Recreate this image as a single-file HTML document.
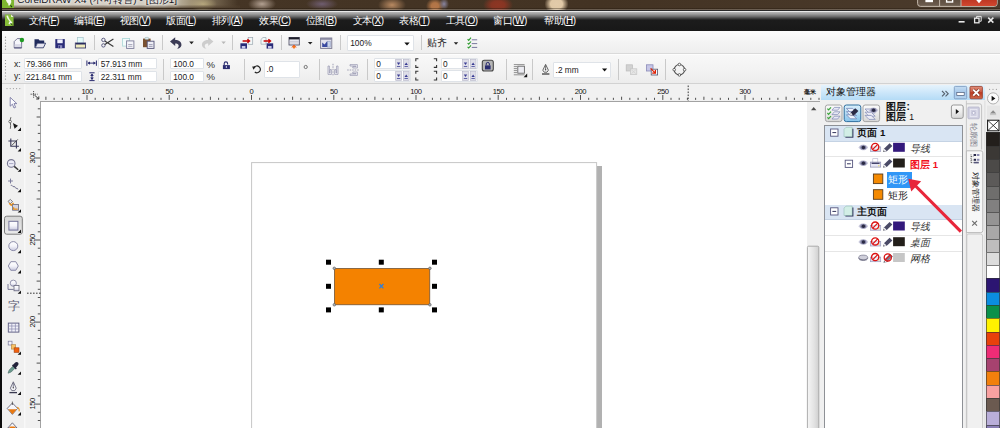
<!DOCTYPE html>
<html>
<head>
<meta charset="utf-8">
<title>CorelDRAW X4</title>
<style>
*{box-sizing:border-box;margin:0;padding:0}
html,body{width:1000px;height:428px;overflow:hidden;background:#fff}
body{font-family:"Liberation Sans",sans-serif;font-size:8.3px;color:#1a1a1a;position:relative}
#app{position:absolute;left:0;top:0;width:1000px;height:428px;overflow:hidden;background:#fff}
.abs{position:absolute}
.t{position:absolute;white-space:nowrap;line-height:1}
/* title bar */
#title{position:absolute;left:0;top:0;width:1000px;height:11px;overflow:hidden;
 background:
 radial-gradient(ellipse 14px 7px at 203px 4px,#a3935f 0,rgba(163,147,95,0) 100%),
 radial-gradient(ellipse 14px 7px at 262px 4px,#b3a192 0,rgba(179,161,146,0) 100%),
 radial-gradient(ellipse 16px 6px at 322px 4px,#6f5d70 0,rgba(111,93,112,0) 100%),
 radial-gradient(ellipse 14px 8px at 392px 5px,#b98a62 0,rgba(185,138,98,0) 100%),
 radial-gradient(ellipse 5px 6px at 444px 4px,#8a86a0 0,rgba(138,134,160,0) 100%),
 radial-gradient(ellipse 9px 8px at 435px 6px,#b5774a 0,#b07446 40%,rgba(181,119,74,0) 100%),
 radial-gradient(ellipse 15px 9px at 498px 5px,#8e3624 0,#873523 45%,rgba(142,51,34,0) 100%),
 radial-gradient(ellipse 12px 10px at 556.5px 4px,#e3cbaa 0,#e0c8a6 50%,rgba(227,201,168,0) 100%),
 linear-gradient(90deg,#463626 0,#433323 600px,#4b3b2c 1000px)}
#title .glow{position:absolute;left:14px;top:0;width:226px;height:8.2px;background:linear-gradient(180deg,rgba(70,54,38,0) 0,rgba(70,54,38,0) 4.6px,rgba(80,64,46,.55) 7px,rgba(70,54,38,.8) 8.2px),linear-gradient(90deg,#d4cec3 0,#d2cbbf 150px,rgba(196,182,150,.7) 178px,rgba(160,145,105,0) 224px)}
#title .shade{position:absolute;left:0;top:7.6px;width:1000px;height:3.4px;background:linear-gradient(180deg,rgba(30,20,10,.35) 0,rgba(30,20,10,.35) .6px,rgba(255,255,255,.2) .7px,rgba(255,255,255,.2) 2px,#2a2a2a 2.2px,#262626 100%)}
/* menu */
#menu{position:absolute;left:0;top:11px;width:1000px;height:20px;background:linear-gradient(180deg,#ececec 0,#e6e6e6 .7px,#b4b4b4 1.3px,#9c9c9c 3px,#6c6c6c 5.5px,#3c3c3c 7.5px,#1c1c1c 9px,#181818 100%)}
#menu .t{color:#fff;font-size:10px;top:4.8px;letter-spacing:-.45px}
/* toolbars */
#tb1{position:absolute;left:2px;top:31px;width:998px;height:23.4px;background:linear-gradient(180deg,#fcfcfc 0,#f4f4f4 50%,#eeeeee 100%);border-bottom:1px solid #dadada}
#tb2{position:absolute;left:2px;top:54px;width:998px;height:30.4px;background:linear-gradient(180deg,#f8f8f8 0,#f2f2f2 60%,#ececec 100%);border-top:1px solid #fdfdfd;border-bottom:1px solid #d2d2d2}
.sep{position:absolute;width:1px;background:#c9c9c9}
.inp{position:absolute;background:#fff;border:1px solid #dfe3e8;border-radius:1px}
.grip{position:absolute;width:1px;border-left:1px dotted #9a9a9a}
#lb{position:absolute;left:0;top:0;width:1.6px;height:428px;background:#0c0c0c}
/* toolbox */
#toolbox{position:absolute;left:2px;top:84px;width:25px;height:344px;background:#f0f0f0}
/* rulers */
#hr{position:absolute;left:25px;top:84px;width:796px;height:18px;background:#f1f1f1}
#vr{position:absolute;left:25px;top:102px;width:16px;height:326px;background:#f1f1f1}
.rl{font-size:7.6px;color:#111;letter-spacing:-.45px}
/* canvas */
#canvas{position:absolute;left:40px;top:101px;width:767.4px;height:327px;background:#fff;border-left:1px solid #a2a2a2;border-top:1px solid #a2a2a2}
#hrl{position:absolute;left:807px;top:101px;width:13px;height:1px;background:#a2a2a2}
#vs{position:absolute;left:807px;top:102px;width:14px;height:326px;background:#f0f0f0}
/* docker */
#dock{position:absolute;left:821px;top:84px;width:165px;height:344px;background:#f0f0f0}
#dhead{position:absolute;left:0;top:1px;width:164px;height:15.4px;background:linear-gradient(180deg,#e6f3fc 0,#cfe8fa 45%,#b4dbf6 100%)}
#tree{position:absolute;left:3px;top:41px;width:139.4px;height:310px;overflow:hidden;background:#fff;border:1px solid #8e9196}
.row{position:absolute;left:0;width:139px;height:15.75px;border-bottom:1px solid #e6e6e6}
.row.nb{border-bottom-color:transparent}
.row.h{background:#d9e5f3;border-bottom:1px solid #c5d3e4}
#tree .t{font-size:9px}
/* palette */
#pal{position:absolute;left:986px;top:84px;width:14px;height:344px;background:#f0f0f0}
.sw{position:absolute;left:-.3px;width:14px;height:13.6px;border:1px solid rgba(50,50,50,.62);border-bottom:none}
</style>
</head>
<body>
<div id="app">

<!-- TITLE BAR -->
<div id="title">
  <div class="glow"></div>
  <div class="abs" style="left:2px;top:0;width:12.4px;height:8.2px;background:#7db52f"></div>
  <svg class="abs" style="left:2px;top:0" width="13" height="9" viewBox="2 0 13 9"><path d="M6,0C6.4,1.8 7.4,3 8.6,4L7.8,5.2L9.6,5.6L10.4,4.2L11.4,2L11,0Z" fill="#f4f9ec"/><path d="M10.4,5.4L12,7" stroke="#1e3a14" stroke-width="1.1"/></svg>
  <div class="t" style="left:17.2px;top:-4.6px;font-size:9.9px;color:#14141e;text-shadow:0 0 3px #fff,0 0 5px #fff;letter-spacing:.1px">CorelDRAW X4 (不可转售) - [图形1]</div>
  <div class="shade"></div>
  <svg class="abs" style="left:0;top:0" width="1000" height="11" viewBox="0 0 1000 11">
    <defs><linearGradient id="gwc" x1="0" y1="0" x2="0" y2="1"><stop offset="0" stop-color="#b8331f"/><stop offset="1" stop-color="#d2472f"/></linearGradient>
    <linearGradient id="gwb" x1="0" y1="0" x2="0" y2="1"><stop offset="0" stop-color="#5a4a3c"/><stop offset="1" stop-color="#6e5e50"/></linearGradient></defs>
    <path d="M917.6,-2V3.6Q917.6,6.4 920.4,6.4H994.4Q997.2,6.4 997.2,3.6V-2Z" fill="url(#gwb)" stroke="#cfc4b8" stroke-width=".9"/>
    <path d="M961.2,-2V6H994.2Q996.8,6 996.8,3.6V-2Z" fill="url(#gwc)"/>
    <path d="M939.6,-1V6.2M961,-1V6.2" stroke="#cfc4b8" stroke-width=".9"/>
    <rect x="925.4" y="-1" width="7.6" height="3.2" fill="#fff"/>
    <rect x="946.6" y="-1" width="6" height="3" fill="none" stroke="#fff" stroke-width="1.4"/>
    <path d="M976,-1.6L979,1.8L982,-1.6" fill="none" stroke="#fff" stroke-width="1.8"/>
  </svg>
</div>

<!-- MENU BAR -->
<div id="menu">
  <svg class="abs" style="left:940px;top:0" width="60" height="20" viewBox="940 11 60 20">
    <path d="M958.6,21.8H964.6" stroke="#e8e8e8" stroke-width="1.6"/>
    <rect x="974.6" y="18.2" width="4.4" height="4.6" fill="none" stroke="#e8e8e8" stroke-width="1.3"/>
    <path d="M976.6,18V16.4H981.2V21.2H979.4" fill="none" stroke="#e8e8e8" stroke-width="1"/>
    <path d="M988.2,17.6L993.4,22.6M993.4,17.6L988.2,22.6" stroke="#e8e8e8" stroke-width="1.5"/>
  </svg>
  <svg class="abs" style="left:0;top:0" width="20" height="20" viewBox="0 11 20 20">
    <path d="M5,14.6H11L13.6,17V26H5Z" fill="#86bd38"/>
    <path d="M11,14.6V17H13.6Z" fill="#e8f4d0"/>
    <path d="M6.4,15.8C6.8,18 8,19.8 9.6,21.4L8.4,23.4L10,24.6L12.4,22.6C10.4,20.6 8.6,18.6 8,15.6Z" fill="#f4f9ec"/>
    <path d="M10.6,23.2L12.6,25.4" stroke="#1e3a14" stroke-width="1"/>
  </svg>
  <div class="t" style="left:28.5px">文件(<u>F</u>)</div>
  <div class="t" style="left:74.0px">编辑(<u>E</u>)</div>
  <div class="t" style="left:119.5px">视图(<u>V</u>)</div>
  <div class="t" style="left:166.0px">版面(<u>L</u>)</div>
  <div class="t" style="left:211.5px">排列(<u>A</u>)</div>
  <div class="t" style="left:259.0px">效果(<u>C</u>)</div>
  <div class="t" style="left:305.5px">位图(<u>B</u>)</div>
  <div class="t" style="left:352.5px">文本(<u>X</u>)</div>
  <div class="t" style="left:399.0px">表格(<u>T</u>)</div>
  <div class="t" style="left:445.5px">工具(<u>O</u>)</div>
  <div class="t" style="left:493.0px">窗口(<u>W</u>)</div>
  <div class="t" style="left:544.0px">帮助(<u>H</u>)</div>
</div>

<!-- TOOLBAR 1 -->
<div id="tb1">
  <div class="sep" style="left:91.5px;top:4px;height:15px"></div>
  <div class="sep" style="left:159.5px;top:4px;height:15px"></div>
  <div class="sep" style="left:230px;top:4px;height:15px"></div>
  <div class="sep" style="left:278.5px;top:4px;height:15px"></div>
  <div class="sep" style="left:337.5px;top:4px;height:15px"></div>
  <div class="sep" style="left:418.5px;top:4px;height:15px"></div>
  <div class="inp" style="left:344.7px;top:4.2px;width:67px;height:15.6px"></div>
  <div class="t" style="left:348.2px;top:8.4px;font-size:8.4px">100%</div>
  <div class="t" style="left:424.8px;top:7px;font-size:9.8px;color:#222">贴齐</div>
</div>

<!-- PROPERTY BAR -->
<div id="tb2">
  <div class="t" style="left:12px;top:5.4px;font-size:8.6px">x:</div>
  <div class="t" style="left:12px;top:17.4px;font-size:8.6px">y:</div>
  <div class="inp" style="left:21.8px;top:2.5px;width:58.4px;height:11.8px"></div>
  <div class="inp" style="left:21.8px;top:15.5px;width:58.4px;height:11.8px"></div>
  <div class="t" style="left:23.9px;top:5.3px">79.366 mm</div>
  <div class="t" style="left:23.9px;top:17.5px">221.841 mm</div>
  <div class="inp" style="left:96.4px;top:2.5px;width:58.4px;height:11.8px"></div>
  <div class="inp" style="left:96.4px;top:15.5px;width:58.4px;height:11.8px"></div>
  <div class="t" style="left:98.7px;top:5.3px">57.913 mm</div>
  <div class="t" style="left:98.7px;top:17.5px">22.311 mm</div>
  <div class="sep" style="left:161px;top:4px;height:21px"></div>
  <div class="inp" style="left:168px;top:2.5px;width:33.5px;height:11.8px"></div>
  <div class="inp" style="left:168px;top:15.5px;width:33.5px;height:11.8px"></div>
  <div class="t" style="left:171.2px;top:5.3px">100.0</div>
  <div class="t" style="left:171.2px;top:17.5px">100.0</div>
  <div class="t" style="left:204.4px;top:4.6px;font-size:9.6px;color:#333">%</div>
  <div class="t" style="left:204.4px;top:17px;font-size:9.6px;color:#333">%</div>
  <div class="sep" style="left:241.5px;top:4px;height:21px"></div>
  <div class="inp" style="left:262.3px;top:6.2px;width:35.4px;height:17px"></div>
  <div class="t" style="left:264.4px;top:10.4px">.0</div>
    <div class="sep" style="left:317.4px;top:4px;height:21px"></div>
  <div class="sep" style="left:365.3px;top:4px;height:21px"></div>
  <div class="inp" style="left:372.3px;top:2.6px;width:36.4px;height:11.8px"></div>
  <div class="inp" style="left:372.3px;top:15.2px;width:36.4px;height:11.8px"></div>
  <div class="t" style="left:374.2px;top:5.3px">0</div>
  <div class="t" style="left:374.2px;top:17.3px">0</div>
  <div class="inp" style="left:439.3px;top:2.6px;width:37px;height:11.8px"></div>
  <div class="inp" style="left:439.3px;top:15.2px;width:37px;height:11.8px"></div>
  <div class="t" style="left:441px;top:5.3px">0</div>
  <div class="t" style="left:441px;top:17.3px">0</div>
  <div class="sep" style="left:503.5px;top:4px;height:21px"></div>
  <div class="sep" style="left:530.4px;top:4px;height:21px"></div>
  <div class="inp" style="left:551.3px;top:7px;width:57.3px;height:16px"></div>
  <div class="t" style="left:553.6px;top:10.8px">.2 mm</div>
  <div class="sep" style="left:615.6px;top:4px;height:21px"></div>
  <div class="sep" style="left:663.4px;top:4px;height:21px"></div>
</div>

<!-- TOOLBOX -->
<div id="toolbox">
  <div class="t" style="left:5.6px;top:215.6px;font-size:11.6px;color:#55556e">字</div>
</div>

<!-- RULERS -->
<div id="hr">
  <div class="t rl" style="left:52.1px;top:4.2px;width:20px;text-align:center">100</div>
  <div class="t rl" style="left:134.3px;top:4.2px;width:20px;text-align:center">50</div>
  <div class="t rl" style="left:216.5px;top:4.2px;width:20px;text-align:center">0</div>
  <div class="t rl" style="left:298.8px;top:4.2px;width:20px;text-align:center">50</div>
  <div class="t rl" style="left:381.0px;top:4.2px;width:20px;text-align:center">100</div>
  <div class="t rl" style="left:463.3px;top:4.2px;width:20px;text-align:center">150</div>
  <div class="t rl" style="left:545.5px;top:4.2px;width:20px;text-align:center">200</div>
  <div class="t rl" style="left:627.8px;top:4.2px;width:20px;text-align:center">250</div>
  <div class="t rl" style="left:710.0px;top:4.2px;width:20px;text-align:center">300</div>
  <div class="t" style="left:778.6px;top:5.4px;font-size:6px;color:#111;font-weight:bold">毫米</div>
</div>
<div id="vr">
  <div class="t rl" style="left:-1.8px;top:52.2px;width:20px;text-align:center;transform:rotate(-90deg)">300</div>
  <div class="t rl" style="left:-1.8px;top:134.3px;width:20px;text-align:center;transform:rotate(-90deg)">250</div>
  <div class="t rl" style="left:-1.8px;top:216.3px;width:20px;text-align:center;transform:rotate(-90deg)">200</div>
  <div class="t rl" style="left:-1.8px;top:298.4px;width:20px;text-align:center;transform:rotate(-90deg)">150</div>
</div>

<!-- CANVAS -->
<div id="canvas">
  <svg class="abs" style="left:0;top:0" width="766" height="326" viewBox="41 102 766 326">
    <rect x="597" y="166" width="5" height="270" fill="#b1b1b1"/>
    <rect x="251.6" y="162.6" width="345" height="280" fill="#fff" stroke="#c6c6c6" stroke-width="1"/>
    <rect x="334.4" y="268.4" width="95.4" height="36.4" fill="#f48200" stroke="#5c4a3a" stroke-width=".7"/>
    <g fill="#000">
      <rect x="326" y="259.7" width="5" height="5"/><rect x="378.8" y="259.7" width="5" height="5"/><rect x="432" y="259.7" width="5" height="5"/>
      <rect x="326" y="283.8" width="5" height="5"/><rect x="432" y="283.8" width="5" height="5"/>
      <rect x="326" y="307.4" width="5" height="5"/><rect x="378.8" y="307.4" width="5" height="5"/><rect x="432" y="307.4" width="5" height="5"/>
    </g>
    <g fill="#aab0b8" stroke="#555" stroke-width=".6">
      <circle cx="334.3" cy="268.3" r="1.3"/><circle cx="429.9" cy="268.3" r="1.3"/><circle cx="334.3" cy="304.8" r="1.3"/><circle cx="429.9" cy="304.8" r="1.3"/>
    </g>
    <path d="M379.4,284L383.4,288.4M383.4,284L379.4,288.4" stroke="#2f7fd8" stroke-width="1.3" fill="none"/>
  </svg>
</div>
<div id="vs"></div>
<div id="hrl"></div>

<!-- DOCKER -->
<div id="dock">
  <div id="dhead">
    <div class="t" style="left:5.4px;top:2.4px;font-size:10px;color:#111">对象管理器</div>
    <svg class="abs" style="left:119px;top:4px" width="10" height="9" viewBox="940 88 10 9"><path d="M942,90L944.7,92.7L942,95.4M945.5,90L948.2,92.7L945.5,95.4" fill="none" stroke="#56626e" stroke-width="1.1"/></svg>
  </div>
  <div class="t" style="left:65.4px;top:18.4px;font-size:10px;font-weight:bold;color:#111">图层:</div>
  <div class="t" style="left:65.4px;top:28.4px;font-size:10px;font-weight:bold;color:#111">图层 <span style="font-weight:normal;font-size:8.6px">1</span></div>
  <div id="tree">
    <div class="row h" style="top:-0.20px"></div>
    <div class="row" style="top:15.55px"></div>
    <div class="row nb" style="top:31.30px"></div>
    <div class="row nb" style="top:47.05px"></div>
    <div class="row nb" style="top:62.80px"></div>
    <div class="row h" style="top:78.55px"></div>
    <div class="row" style="top:94.30px"></div>
    <div class="row" style="top:110.05px"></div>
    <div class="row nb" style="top:125.80px"></div>
    <div class="abs" style="left:62.1px;top:46.1px;width:25px;height:15.8px;background:#3096f6"></div>
    <div class="t" style="left:32.4px;top:2.4px;font-weight:bold;font-size:9.7px;color:#111">页面 1</div>
    <div class="t" style="left:85.0px;top:17.6px;font-style:italic;font-size:10px;color:#333">导线</div>
    <div class="t" style="left:85.2px;top:33.8px;font-weight:bold;font-size:9.6px;color:#f2101c">图层 1</div>
    <div class="t" style="left:62.6px;top:49.4px;font-size:9.6px;color:#fff">矩形</div>
    <div class="t" style="left:62.6px;top:65.2px;font-size:9.6px;color:#222">矩形</div>
    <div class="t" style="left:32.4px;top:80.9px;font-weight:bold;font-size:9.7px;color:#111">主页面</div>
    <div class="t" style="left:85.0px;top:96.2px;font-style:italic;font-size:10px;color:#333">导线</div>
    <div class="t" style="left:85.0px;top:111.9px;font-style:italic;font-size:10px;color:#333">桌面</div>
    <div class="t" style="left:85.0px;top:127.7px;font-style:italic;font-size:10px;color:#333">网格</div>
  </div>
</div>

<!-- PALETTE -->
<div id="pal">
  <svg class="abs" style="left:0;top:0" width="14" height="50" viewBox="986 84 14 50">
    <g fill="#a4a4a4"><circle cx="989.6" cy="89.4" r=".6"/><circle cx="993" cy="89.4" r=".6"/><circle cx="996.4" cy="89.4" r=".6"/></g>
    <circle cx="993.1" cy="98.4" r="5.6" fill="#fbfbfb" stroke="#a8a8a8" stroke-width=".9"/>
    <path d="M991.6,95.8V101L995.4,98.4Z" fill="#111"/>
    <rect x="987" y="105.6" width="13" height="13" fill="#e6e6e6"/>
    <path d="M990,113.6L993.1,110.2L996.2,113.6Z" fill="#8c8c8c"/><path d="M990,114.6H996.2" stroke="#b4b4b4" stroke-width=".7"/>
    <rect x="987.6" y="120.2" width="11.4" height="10.6" fill="#fff" stroke="#111" stroke-width="1"/>
    <path d="M987.6,120.2L999,130.8M999,120.2L987.6,130.8" stroke="#111" stroke-width=".8"/>
  </svg>
  <div class="sw" style="top:48.40px;background:#231f1c"></div>
  <div class="sw" style="top:61.68px;background:#3b3835"></div>
  <div class="sw" style="top:74.96px;background:#4c4a48"></div>
  <div class="sw" style="top:88.24px;background:#5c5a59"></div>
  <div class="sw" style="top:101.52px;background:#6f6e6d"></div>
  <div class="sw" style="top:114.80px;background:#818080"></div>
  <div class="sw" style="top:128.08px;background:#959494"></div>
  <div class="sw" style="top:141.36px;background:#a9a8a8"></div>
  <div class="sw" style="top:154.64px;background:#bebdbd"></div>
  <div class="sw" style="top:167.92px;background:#dcdcdc"></div>
  <div class="sw" style="top:181.20px;background:#ffffff"></div>
  <div class="sw" style="top:194.48px;background:#2c1572"></div>
  <div class="sw" style="top:207.76px;background:#0b8de0"></div>
  <div class="sw" style="top:221.04px;background:#0a904a"></div>
  <div class="sw" style="top:234.32px;background:#fff200"></div>
  <div class="sw" style="top:247.60px;background:#e8410b"></div>
  <div class="sw" style="top:260.88px;background:#ee2c76"></div>
  <div class="sw" style="top:274.16px;background:#a6426f"></div>
  <div class="sw" style="top:287.44px;background:#f2800c"></div>
  <div class="sw" style="top:300.72px;background:#f9a1a1"></div>
  <div class="sw" style="top:314.00px;background:#6b5a50"></div>
  <div class="sw" style="top:327.28px;background:#b9aed9"></div>
  <div class="sw" style="top:340.56px;background:#8a7fb5"></div>
</div>

<svg id="ic1" class="abs" style="left:0;top:0" width="1000" height="428" viewBox="0 0 1000 428">
<!-- tb1 grip -->
<g fill="#8c8c8c"><circle cx="5.5" cy="37.2" r=".6"/><circle cx="5.5" cy="40.2" r=".6"/><circle cx="5.5" cy="43.2" r=".6"/><circle cx="5.5" cy="46.2" r=".6"/><circle cx="5.5" cy="49.2" r=".6"/></g>
<!-- new -->
<path d="M14.2,47.8V41.6L17.2,38.6H21.6V47.8Z" fill="#f6f6fb" stroke="#6c6c8c" stroke-width=".9"/>
<path d="M14.6,44.2H21.2V47.4H14.6Z" fill="#d9d9e6"/>
<path d="M14.2,47.9H21.6" stroke="#3a3a6a" stroke-width=".9"/>
<circle cx="21.9" cy="40" r="2.2" fill="#1f9a22"/>
<!-- open -->
<path d="M34.5,47.8V39.2H38.6L39.6,40.6H44.2V43.2H37.2L35,47.8Z" fill="#1f2a5c"/>
<path d="M35.2,47.8L37.4,43.2H45.6L43.4,47.8Z" fill="#e4e4f0" stroke="#1f2a5c" stroke-width=".8"/>
<!-- save -->
<rect x="55.3" y="39.1" width="9.5" height="9.1" fill="#2a2c78"/>
<rect x="57.3" y="39.4" width="5.4" height="3.8" fill="#eeeefc"/>
<rect x="58" y="45.2" width="4.2" height="3" fill="#8c8cc0"/>
<rect x="58.6" y="45.8" width="1.3" height="2.4" fill="#2a2c78"/>
<!-- print -->
<rect x="77.4" y="37.6" width="5.8" height="5.6" fill="#e4fbfa" stroke="#a5c4cc" stroke-width=".7"/>
<rect x="75.3" y="43" width="10.3" height="5" fill="#efebbd" stroke="#2a2c60" stroke-width=".8"/>
<rect x="76" y="43" width="9" height="1.5" fill="#2a2c60"/>
<!-- scissors -->
<g fill="none" stroke="#5a5a80" stroke-width="1"><circle cx="103.4" cy="39.9" r="1.7"/><circle cx="103.4" cy="45.4" r="1.7"/></g>
<path d="M104.8,41L113.4,46.4M104.8,44.4L113.4,39" stroke="#3a3a3a" stroke-width="1.2" fill="none"/>
<!-- copy -->
<rect x="122.6" y="38.5" width="7" height="7.6" fill="#f2fbfb" stroke="#a9d6d6" stroke-width=".8"/>
<rect x="126.6" y="40.9" width="7.3" height="7.5" fill="#f5f5fa" stroke="#7b7b98" stroke-width=".9"/>
<path d="M128.2,44.5H132.4M128.2,46.3H132.4" stroke="#9a9ab0" stroke-width=".8"/>
<!-- paste -->
<rect x="143" y="38.6" width="7.6" height="8.6" fill="#7a5131"/>
<rect x="145" y="37.4" width="3.6" height="2.2" rx=".8" fill="#dfeaf0" stroke="#8aa" stroke-width=".5"/>
<rect x="147.2" y="41.2" width="6.8" height="7.2" fill="#eeeef5" stroke="#55557a" stroke-width=".9"/>
<path d="M148.8,44.6H152.6M148.8,46.4H152.6" stroke="#8a8aa6" stroke-width=".8"/>
<!-- undo -->
<path id="undo" d="M170,41.6L175.2,37.2V39.9C179.6,39.8 181.9,42.5 181.4,45.4C181,47.4 179.3,48.6 177,48.6C178.6,47.6 179,45.9 178.4,44.8C177.8,43.6 176.5,43.4 175.2,43.4V46Z" fill="#3c3c56"/>
<path d="M189.2,41.6h4.6l-2.3,2.6z" fill="#222"/>
<!-- redo -->
<path d="M213.4,41.6L208.2,37.2V39.9C203.8,39.8 201.5,42.5 202,45.4C202.4,47.4 204.1,48.6 206.4,48.6C204.8,47.6 204.4,45.9 205,44.8C205.6,43.6 206.9,43.4 208.2,43.4V46Z" fill="#cdcdcd"/>
<path d="M221.4,41.6h4.4l-2.2,2.5z" fill="#b8b8b8"/>
<!-- import -->
<rect x="248.2" y="37.5" width="4.5" height="6.8" fill="#f2f7f7" stroke="#9aa6b0" stroke-width=".7"/>
<rect x="240.4" y="43.3" width="6.6" height="5.3" fill="#2a2c78"/>
<rect x="241.8" y="46" width="3.6" height="2.6" fill="#c8c8e8"/>
<path d="M242.6,41H249M247.4,39.2L249.6,41L247.4,42.8" stroke="#c40000" stroke-width="1.3" fill="none"/>
<!-- export -->
<path d="M261,44.2V39.4L263,37.5H266V44.2Z" fill="#f2f7f7" stroke="#9aa6b0" stroke-width=".7"/>
<rect x="266.6" y="43.3" width="6.6" height="5.3" fill="#2a2c78"/>
<rect x="268" y="46" width="3.6" height="2.6" fill="#c8c8e8"/>
<path d="M263.6,41H270M268.4,39.2L270.6,41L268.4,42.8" stroke="#c40000" stroke-width="1.3" fill="none"/>
<!-- launcher -->
<rect x="289" y="37.5" width="10.3" height="7.5" fill="#e8e8f0" stroke="#44445a" stroke-width=".8"/>
<rect x="289" y="37.3" width="10.3" height="2.1" fill="#1e1e2a"/>
<path d="M289.6,41.5H298.6M289.6,43H298.6" stroke="#b8b8c8" stroke-width=".6"/>
<path d="M294,44.8L296.8,47.5L295.2,47.2L294,49L292.8,47.2L291.2,47.5Z" fill="#f0450c"/><circle cx="294" cy="47" r=".8" fill="#f8c020"/>
<path d="M307.9,41.9h4.6l-2.3,2.6z" fill="#222"/>
<!-- welcome -->
<rect x="320.6" y="38" width="11.2" height="10.4" fill="#e2e2ec" stroke="#77778f" stroke-width=".9"/>
<rect x="320.6" y="38" width="11.2" height="1.8" fill="#8a8aa2"/>
<path d="M322.2,47V42.4L324.6,44.6L326.8,41.4L328,43V47Z" fill="#3a4aa0"/>
<rect x="327.4" y="41.2" width="2.8" height="5.8" fill="#c9d3ea" stroke="#8090b8" stroke-width=".5"/>
<!-- zoom combo arrow -->
<path d="M404.3,42.4h5.4l-2.7,3z" fill="#111"/>
<path d="M453.8,42.2h4.4l-2.2,2.5z" fill="#222"/>
<!-- options -->
<g fill="none" stroke="#2c9a2c" stroke-width="1.1"><path d="M467.6,39.2l1.1,1.2l2.3,-2.7"/><path d="M467.6,43l1.1,1.2l2.3,-2.7"/><path d="M467.6,46.8l1.1,1.2l2.3,-2.7"/></g>
<path d="M471.8,39.8H477.2M471.8,43.6H477.2M471.8,47.4H477.2" stroke="#6a6a92" stroke-width=".9"/>
</svg>
<svg id="ic2" class="abs" style="left:0;top:0" width="1000" height="428" viewBox="0 0 1000 428">
<!-- pb grip -->
<g fill="#8c8c8c"><circle cx="5.5" cy="60.5" r=".6"/><circle cx="5.5" cy="63.6" r=".6"/><circle cx="5.5" cy="66.7" r=".6"/><circle cx="5.5" cy="69.8" r=".6"/><circle cx="5.5" cy="72.9" r=".6"/><circle cx="5.5" cy="76" r=".6"/><circle cx="5.5" cy="79.1" r=".6"/></g>
<!-- width icon -->
<path d="M86.9,60.5V65.8M96.4,60.5V65.8M88,63.1H95.4" stroke="#2a2c70" stroke-width="1" fill="none"/>
<path d="M87.6,63.1L90,61.4V64.8ZM95.8,63.1L93.4,61.4V64.8Z" fill="#2a2c70"/>
<!-- height icon -->
<path d="M89.4,72.8H94.6M89.4,80.6H94.6M92,74H92V79.4" stroke="#2a2c70" stroke-width="1" fill="none"/>
<path d="M92,73.4L93.8,76H90.2ZM92,80L93.8,77.4H90.2Z" fill="#2a2c70"/>
<!-- lock open -->
<rect x="222.9" y="65.1" width="7" height="4" fill="#2a2c70"/>
<path d="M224.2,65.2V63.6A1.7,1.7 0 0 1 227.6,63.6V64.4" stroke="#2a2c70" stroke-width="1.1" fill="none"/>
<rect x="225.8" y="66.2" width="1.2" height="1.6" fill="#d8d8f0"/>
<!-- rotate -->
<path d="M254.2,67.4A3.4,3.4 0 1 1 254.8,72" stroke="#222" stroke-width="1.2" fill="none"/>
<path d="M252.2,66.4L256,66.6L253.4,69.8Z" fill="#222"/>
<circle cx="305.7" cy="67" r="1.6" fill="none" stroke="#5a5a5a" stroke-width=".8"/>
<!-- mirror h -->
<path d="M333,63.8V76" stroke="#8a8aa4" stroke-width=".8" stroke-dasharray="1.5 1"/>
<path d="M328,66V74.4H331.4V69.6H330V73H329.4V66Z" fill="#f3f3f8" stroke="#8c8ca8" stroke-width=".65"/>
<path d="M338,66V74.4H334.6V69.6H336V73H336.6V66Z" fill="#f3f3f8" stroke="#8c8ca8" stroke-width=".65"/>
<!-- mirror v -->
<path d="M347.2,70H359.6" stroke="#8a8aa4" stroke-width=".8" stroke-dasharray="1.5 1"/>
<path d="M350,64.6H357.4V68H352.8V66.6H356V66H350Z" fill="#f3f3f8" stroke="#8c8ca8" stroke-width=".65"/>
<path d="M350,75.4H357.4V72H352.8V73.4H356V74H350Z" fill="#f3f3f8" stroke="#8c8ca8" stroke-width=".65"/>
<!-- spinners -->
<g id="spin1">
<rect x="395.7" y="59.5" width="5.8" height="9" fill="#dedee8" stroke="#b4b4c6" stroke-width=".6"/>
<rect x="403.3" y="59.5" width="5.8" height="9" fill="#dedee8" stroke="#b4b4c6" stroke-width=".6"/>
<path d="M396.9,62.6h3.4l-1.7,2.4zM396.9,66.2h3.4v.7h-3.4z" fill="#3a3c94"/>
<path d="M404.5,65h3.4l-1.7,-2.4zM404.5,66.2h3.4v.7h-3.4z" fill="#3a3c94"/>
</g>
<use href="#spin1" y="12"/>
<use href="#spin1" x="66.9"/>
<use href="#spin1" x="66.9" y="12"/>
<!-- corner brackets -->
<g id="brk" fill="none" stroke="#333" stroke-width="1.1">
<path d="M418.4,58.7H415.8V61.2M415.8,64.9V67.4H418.4"/>
<path d="M433.8,58.7H436.6V61.2M436.6,64.9V67.4H433.8"/>
</g>
<use href="#brk" y="12.6"/>
<!-- lock button -->
<rect x="482.3" y="60.2" width="11" height="10.8" rx="2" fill="#b5b5b5" stroke="#474747" stroke-width="1.1"/>
<rect x="485" y="65.4" width="5.6" height="4" fill="#2a2c70"/>
<path d="M486.2,65.4V64A1.6,1.6 0 0 1 489.4,64V65.4" stroke="#2a2c70" stroke-width="1" fill="none"/>
<!-- wrap icon -->
<path d="M513.8,64.6H524.6M513.8,66.6H517M513.8,68.6H517M513.8,70.6H517M513.8,72.6H517M513.8,74.8H524.6" stroke="#777" stroke-width=".8"/>
<rect x="517.8" y="66.2" width="6.6" height="7" fill="#ececf2" stroke="#666" stroke-width=".9"/>
<path d="M523.6,77.2H527.2V73.6Z" fill="#111"/>
<!-- pen nib -->
<path d="M545.6,64.4L548.4,70.2L547,72.2H544.2L542.8,70.2Z" fill="#f2f2f2" stroke="#444" stroke-width=".8"/>
<path d="M545.6,65.4V69.4" stroke="#444" stroke-width=".7"/>
<circle cx="545.6" cy="69.8" r=".7" fill="#444"/>
<path d="M542,74H549.4" stroke="#333" stroke-width="1.2"/>
<!-- combo arrow -->
<path d="M602,68.6h5.2l-2.6,3z" fill="#111"/>
<!-- icon1 faded -->
<rect x="626.2" y="64.8" width="6.4" height="6.2" fill="#d2d2d2" stroke="#bcbcbc" stroke-width=".7"/>
<rect x="630.4" y="68.8" width="6.4" height="5.8" fill="#e6e6e6" stroke="#c4c4c4" stroke-width=".7"/>
<path d="M631.4,69.8L635.8,73.6M635.8,69.8L631.4,73.6" stroke="#d0d0d0" stroke-width=".7"/>
<!-- icon2 -->
<rect x="646.6" y="64.8" width="6.4" height="6.2" fill="#c6c6e6" stroke="#8a8ab8" stroke-width=".8"/>
<rect x="651.2" y="69.2" width="6.4" height="5.8" fill="#f6f6ff" stroke="#55556a" stroke-width=".8"/>
<path d="M650.6,68.4L654.8,72.6M655.4,70V73.2H652.2" stroke="#e02000" stroke-width="1.2" fill="none"/>
<!-- circle icon -->
<circle cx="679.4" cy="69.7" r="5.2" fill="none" stroke="#555" stroke-width="1.1"/>
<g fill="#fff" stroke="#444" stroke-width=".8"><circle cx="679.4" cy="64.5" r="1.3"/><circle cx="684.6" cy="69.7" r="1.3"/><circle cx="679.4" cy="74.9" r="1.3"/><circle cx="674.2" cy="69.7" r="1.3"/></g>
</svg>
<svg id="ic3" class="abs" style="left:0;top:0" width="1000" height="428" viewBox="0 0 1000 428">
<path d="M87.0,95V99.9M169.2,95V99.9M251.5,95V99.9M333.8,95V99.9M416.0,95V99.9M498.2,95V99.9M580.5,95V99.9M662.8,95V99.9M745.0,95V99.9M45.9,96.7V99.9M128.1,96.7V99.9M210.4,96.7V99.9M292.6,96.7V99.9M374.9,96.7V99.9M457.1,96.7V99.9M539.4,96.7V99.9M621.6,96.7V99.9M703.9,96.7V99.9M786.1,96.7V99.9M54.1,97.8V99.9M62.3,97.8V99.9M70.6,97.8V99.9M78.8,97.8V99.9M95.2,97.8V99.9M103.5,97.8V99.9M111.7,97.8V99.9M119.9,97.8V99.9M136.4,97.8V99.9M144.6,97.8V99.9M152.8,97.8V99.9M161.0,97.8V99.9M177.5,97.8V99.9M185.7,97.8V99.9M193.9,97.8V99.9M202.2,97.8V99.9M218.6,97.8V99.9M226.8,97.8V99.9M235.1,97.8V99.9M243.3,97.8V99.9M259.7,97.8V99.9M267.9,97.8V99.9M276.2,97.8V99.9M284.4,97.8V99.9M300.9,97.8V99.9M309.1,97.8V99.9M317.3,97.8V99.9M325.5,97.8V99.9M342.0,97.8V99.9M350.2,97.8V99.9M358.4,97.8V99.9M366.6,97.8V99.9M383.1,97.8V99.9M391.3,97.8V99.9M399.5,97.8V99.9M407.8,97.8V99.9M424.2,97.8V99.9M432.4,97.8V99.9M440.7,97.8V99.9M448.9,97.8V99.9M465.4,97.8V99.9M473.6,97.8V99.9M481.8,97.8V99.9M490.0,97.8V99.9M506.5,97.8V99.9M514.7,97.8V99.9M522.9,97.8V99.9M531.1,97.8V99.9M547.6,97.8V99.9M555.8,97.8V99.9M564.0,97.8V99.9M572.3,97.8V99.9M588.7,97.8V99.9M597.0,97.8V99.9M605.2,97.8V99.9M613.4,97.8V99.9M629.8,97.8V99.9M638.1,97.8V99.9M646.3,97.8V99.9M654.5,97.8V99.9M671.0,97.8V99.9M679.2,97.8V99.9M687.4,97.8V99.9M695.6,97.8V99.9M712.1,97.8V99.9M720.3,97.8V99.9M728.5,97.8V99.9M736.8,97.8V99.9M753.2,97.8V99.9M761.5,97.8V99.9M769.7,97.8V99.9M777.9,97.8V99.9M794.4,97.8V99.9M802.6,97.8V99.9M810.8,97.8V99.9M819.0,97.8V99.9" stroke="#333" stroke-width=".85" fill="none"/>
<path d="M37.8,108.8H40.2M36.6,117.0H40.2M37.8,125.2H40.2M37.8,133.4H40.2M37.8,141.6H40.2M37.8,149.8H40.2M35.2,158.0H40.2M37.8,166.2H40.2M37.8,174.4H40.2M37.8,182.6H40.2M37.8,190.8H40.2M36.6,199.0H40.2M37.8,207.2H40.2M37.8,215.4H40.2M37.8,223.6H40.2M37.8,231.8H40.2M35.2,240.0H40.2M37.8,248.2H40.2M37.8,256.5H40.2M37.8,264.7H40.2M37.8,272.9H40.2M36.6,281.1H40.2M37.8,289.3H40.2M37.8,297.5H40.2M37.8,305.7H40.2M37.8,313.9H40.2M35.2,322.1H40.2M37.8,330.3H40.2M37.8,338.5H40.2M37.8,346.7H40.2M37.8,354.9H40.2M36.6,363.1H40.2M37.8,371.3H40.2M37.8,379.5H40.2M37.8,387.7H40.2M37.8,395.9H40.2M35.2,404.1H40.2M37.8,412.3H40.2M37.8,420.5H40.2" stroke="#333" stroke-width=".85" fill="none"/>
<path d="M688.2,85.5V101" stroke="#222" stroke-width=".9" stroke-dasharray="1.6 1.4" fill="none"/>
<path d="M27,293.2H40.5" stroke="#222" stroke-width=".9" stroke-dasharray="1.6 1.4" fill="none"/>
<path d="M33.6,91V98M30.6,94.2H37.6" stroke="#222" stroke-width=".8" stroke-dasharray="1.2 .9" fill="none"/><path d="M34.4,95L38.6,98.8M38.8,96.4V99H36.2" stroke="#222" stroke-width=".9" fill="none"/>
</svg>
<svg id="ic4" class="abs" style="left:0;top:0" width="1000" height="428" viewBox="0 0 1000 428">
<defs>
<linearGradient id="gsh" x1="0" y1="0" x2="0" y2="1"><stop offset="0" stop-color="#fff"/><stop offset=".5" stop-color="#f4f4fa"/><stop offset="1" stop-color="#c9c9de"/></linearGradient>
<linearGradient id="gbtn" x1="0" y1="0" x2="0" y2="1"><stop offset="0" stop-color="#d6d6d6"/><stop offset="1" stop-color="#eaeaea"/></linearGradient>
<path id="fly" d="M0,3.4H3.4V0Z" fill="#111"/>
</defs>
<!-- grip -->
<g fill="#9a9a9a"><circle cx="7" cy="88.6" r=".6"/><circle cx="10.2" cy="88.6" r=".6"/><circle cx="13.4" cy="88.6" r=".6"/><circle cx="16.6" cy="88.6" r=".6"/><circle cx="19.8" cy="88.6" r=".6"/></g>
<!-- divider -->
<path d="M24.8,84V428" stroke="#fbfbfb" stroke-width="1"/>
<!-- pick -->
<path d="M10.2,97.4V106.2L12.4,104.2L14,108L15.6,107.3L14,103.6H16.8Z" fill="#fdfdff" stroke="#6c6c9a" stroke-width=".8" stroke-linejoin="round"/>
<!-- shape -->
<path d="M10.9,117.2C9.2,120.5 11.4,124.5 10.3,128.8" stroke="#555" stroke-width=".9" fill="none"/>
<circle cx="10.1" cy="121.6" r="1.3" fill="#fff" stroke="#444" stroke-width=".7"/>
<path d="M12.9,123L18,125.8L14.6,128.8Z" fill="#1a1a1a"/>
<use href="#fly" x="17.6" y="127.6"/>
<!-- crop -->
<path d="M10.8,138.4V146.2H18.9M8.4,141H16.4V148.4" stroke="#3a3a5a" stroke-width="1.1" fill="none"/>
<path d="M11.6,145.6L17.8,139.4" stroke="#444" stroke-width=".9"/>
<use href="#fly" x="17.6" y="148"/>
<!-- zoom -->
<circle cx="11.2" cy="163.4" r="3.8" fill="#ececf6" stroke="#777792" stroke-width="1.1"/>
<path d="M9,163.6H13.4" stroke="#a8a8c4" stroke-width="1"/>
<path d="M14.2,166.4L18.2,169.8" stroke="#333" stroke-width="1.5"/>
<use href="#fly" x="17.6" y="168.4"/>
<!-- freehand -->
<path d="M10.5,178.6V183.4M8.1,181H12.9" stroke="#7c7c9c" stroke-width="1"/>
<path d="M10.8,185.4C12.2,184.2 12.6,187.6 14,186.6C15.2,185.8 15.4,189.2 16.8,188.4L18.2,189.2" stroke="#6c6c8c" stroke-width="1" fill="none"/>
<use href="#fly" x="17.6" y="188.8"/>
<!-- smart fill -->
<path d="M8,201.4L10.4,199.4L12.6,201.6L10.2,203.8Z" fill="#e4e4ee" stroke="#555" stroke-width=".7"/>
<path d="M9.2,203.2L11.2,205.2L13.6,203" stroke="#e8901c" stroke-width="1.4" fill="none"/>
<rect x="12.6" y="204.6" width="6" height="5.6" fill="#d4d4e0" stroke="#66667c" stroke-width=".8"/>
<path d="M13.6,207.2V209.2H17.6" stroke="#e8901c" stroke-width="1.3" fill="none"/>
<use href="#fly" x="17.6" y="209.2"/>
<!-- rectangle (selected) -->
<rect x="4.5" y="216.2" width="17.8" height="18" rx="2.2" fill="url(#gbtn)" stroke="#7c7c7c" stroke-width="1"/>
<rect x="8.9" y="221.3" width="9" height="8.8" fill="url(#gsh)" stroke="#74749a" stroke-width="1"/>
<use href="#fly" x="17.6" y="229.6"/>
<!-- ellipse -->
<circle cx="13.3" cy="246.1" r="4.5" fill="url(#gsh)" stroke="#8080a0" stroke-width=".9"/>
<use href="#fly" x="17.6" y="249.8"/>
<!-- polygon -->
<path d="M8.3,266L10.8,261.7H15.8L18.3,266L15.8,270.3H10.8Z" fill="url(#gsh)" stroke="#8080a0" stroke-width=".9"/>
<use href="#fly" x="17.6" y="270"/>
<!-- basic shapes -->
<path d="M8,284V289.4H13.6" stroke="#6c6c8c" stroke-width=".9" fill="none"/>
<circle cx="13.3" cy="283.2" r="3.1" fill="url(#gsh)" stroke="#7c7c9c" stroke-width=".8"/>
<rect x="14" y="285.4" width="5" height="5.4" fill="url(#gsh)" stroke="#66667c" stroke-width=".8"/>
<use href="#fly" x="17.6" y="290.4"/>
<!-- table -->
<rect x="8.3" y="323.1" width="10.6" height="9" fill="#f1f1f9" stroke="#56567c" stroke-width=".9"/>
<path d="M8.3,326H18.9M8.3,329H18.9M11.8,323.1V332.1M15.4,323.1V332.1" stroke="#8a8aae" stroke-width=".7"/>
<!-- blend -->
<rect x="8.2" y="341.2" width="3.8" height="3.8" fill="#f4f4fc" stroke="#77779a" stroke-width=".7"/>
<rect x="11.3" y="344.7" width="4.4" height="4.4" fill="#f9c264" stroke="#b08040" stroke-width=".6"/>
<rect x="14.1" y="347.8" width="4.9" height="4.6" fill="#f0600e" stroke="#a04010" stroke-width=".6"/>
<use href="#fly" x="17.6" y="351.4"/>
<!-- eyedropper -->
<path d="M8,373.2L9.2,370L13.6,365.6L15.6,367.6L11.2,372Z" fill="#6a9a8e" stroke="#4a6a64" stroke-width=".6"/>
<path d="M13,364.8L15,362.8C16,361.6 17.6,362 18.2,362.8C18.8,363.8 18.6,365 17.6,365.8L16,367.8L16.8,368.6L15.8,369.4L12,365.6L12.8,364.6Z" fill="#22223a"/>
<use href="#fly" x="17.6" y="371.4"/>
<!-- outline pen -->
<path d="M13.3,381.8L16.2,388.2L14.8,390.6H11.8L10.4,388.2Z" fill="#f4f4f8" stroke="#55556c" stroke-width=".8"/>
<path d="M13.3,383V387.4" stroke="#55556c" stroke-width=".7"/>
<circle cx="13.3" cy="387.8" r=".7" fill="#444"/>
<path d="M9.4,392.6H17" stroke="#3a3a50" stroke-width="1.3"/>
<use href="#fly" x="17.6" y="391.6"/>
<!-- fill bucket -->
<path d="M12.4,403L17.6,408.4L12.4,414.4L7.2,408.4Z" fill="#f6f6fa" stroke="#55556c" stroke-width=".8"/>
<path d="M8.2,409.2H16.8L12.4,414.2Z" fill="#e87810"/>
<path d="M12.4,401.6V405" stroke="#444" stroke-width=".8"/>
<path d="M17.2,407.4C19,407.8 19.6,409.6 19,411.4" stroke="#e8901c" stroke-width="1.1" fill="none"/>
<use href="#fly" x="17.6" y="412"/>
<!-- interactive fill -->
<path d="M12.4,422.8L17,428H7.8Z" fill="#f4f4f8" stroke="#55556c" stroke-width=".8"/>
<path d="M10.4,426.4H14.4L15.6,428H9.2Z" fill="#e87810"/>
</svg>
<svg id="ic5" class="abs" style="left:0;top:0" width="1000" height="428" viewBox="0 0 1000 428">
<defs>
<linearGradient id="gb1" x1="0" y1="0" x2="0" y2="1"><stop offset="0" stop-color="#fbfbfb"/><stop offset=".5" stop-color="#ececec"/><stop offset="1" stop-color="#d6d6d6"/></linearGradient>
<linearGradient id="gb2" x1="0" y1="0" x2="0" y2="1"><stop offset="0" stop-color="#d9effb"/><stop offset=".5" stop-color="#b4dcf5"/><stop offset="1" stop-color="#86c3ea"/></linearGradient>
<linearGradient id="gcl" x1="0" y1="0" x2="0" y2="1"><stop offset="0" stop-color="#e0907c"/><stop offset=".45" stop-color="#cc5a44"/><stop offset=".5" stop-color="#bd3a22"/><stop offset="1" stop-color="#cf6a4c"/></linearGradient>
<linearGradient id="gmn" x1="0" y1="0" x2="0" y2="1"><stop offset="0" stop-color="#c4dcf2"/><stop offset=".5" stop-color="#a6c8ea"/><stop offset="1" stop-color="#b4d2ee"/></linearGradient>
<linearGradient id="gth" x1="0" y1="0" x2="1" y2="0"><stop offset="0" stop-color="#f6f6f6"/><stop offset=".6" stop-color="#e2e2e2"/><stop offset="1" stop-color="#cfcfcf"/></linearGradient>
<g id="eye"><path d="M0,2.9C1.6,0.6 3.4,0 4.9,0C6.6,0 8.4,0.8 9.7,2.9C8.4,5 6.6,5.7 4.9,5.7C3.4,5.7 1.6,5 0,2.9Z" fill="#c6c6da"/><ellipse cx="4.9" cy="2.9" rx="3" ry="2.2" fill="#8484a6"/><ellipse cx="5" cy="2.9" rx="1.7" ry="1.7" fill="#2a2a44"/></g>
<g id="pencil"><path d="M0,8.4L1,5L6.4,-0.2L9.2,2.4L3.6,7.8Z" fill="#4a4a66"/><path d="M0,8.4L1.1,5.2L3.4,7.6Z" fill="#f2f2f6"/><path d="M0,8.4L.6,6.9L1.5,7.8Z" fill="#333"/></g>
<g id="printer"><rect x="2.6" y="0" width="5" height="3.6" fill="#fff" stroke="#b4b4cc" stroke-width=".6"/><rect x=".3" y="3.4" width="10.2" height="5" fill="#e7e7f5" stroke="#8a8aae" stroke-width=".7"/><rect x="1.4" y="3.9" width="8" height="1.4" fill="#45456c"/><rect x="8" y="6.4" width="1.2" height="1.2" fill="#f0e060"/></g>
<g id="noprint"><rect x=".3" y="3.9" width="10.2" height="4.6" fill="#dedef1" stroke="#9a9abc" stroke-width=".7"/><rect x="8" y="6.2" width="1.2" height="1.2" fill="#f0e060"/><circle cx="5" cy="3.9" r="3.6" fill="rgba(255,255,255,.55)" stroke="#dc1414" stroke-width="1.3"/><path d="M7.5,1.4L2.5,6.4" stroke="#dc1414" stroke-width="1.3"/></g>
<g id="minus"><rect x="0" y="0" width="7.4" height="7.2" fill="#fff" stroke="#56567e" stroke-width=".9"/><path d="M1.8,3.6H5.6" stroke="#33335a" stroke-width="1"/></g>
<g id="pageic"><path d="M1.4,1.4H9.4V10.4H1.4Z" fill="#2c2c56"/><path d="M0,2L2,0H8.2V9.4H0Z" fill="#d2eee6" stroke="#8ab4ac" stroke-width=".5"/></g>
</defs>
<rect x="954.3" y="86.4" width="12.4" height="12.4" rx="1" fill="url(#gmn)" stroke="#7d9cc2" stroke-width=".9"/>
<rect x="956.8" y="92.4" width="7.4" height="3" fill="#fff" stroke="#4a5a78" stroke-width=".7"/>
<rect x="970" y="86.4" width="12.4" height="12.4" rx="1" fill="url(#gcl)" stroke="#9a4634" stroke-width=".9"/>
<path d="M973.2,89.6L979.2,95.6M979.2,89.6L973.2,95.6" stroke="#7a3020" stroke-width="3"/><path d="M973.2,89.6L979.2,95.6M979.2,89.6L973.2,95.6" stroke="#fff" stroke-width="1.9"/>
<rect x="825.4" y="105" width="16.6" height="16.6" rx="2.2" fill="url(#gb1)" stroke="#9c9c9c" stroke-width=".9"/>
<rect x="844.2" y="105" width="16.6" height="16.6" rx="2.2" fill="url(#gb2)" stroke="#2e6e9e" stroke-width="1"/>
<rect x="863" y="105" width="16.6" height="16.6" rx="2.2" fill="url(#gb1)" stroke="#9c9c9c" stroke-width=".9"/>
<path d="M827.4,108.6l1.2,1.3l2.4,-2.6" stroke="#3aa43a" stroke-width="1.2" fill="none"/>
<path d="M832,110.19999999999999L834.4,107.39999999999999H840L837.6,110.19999999999999Z" fill="#e9e9f6" stroke="#7c86b4" stroke-width=".7"/>
<path d="M827.4,113l1.2,1.3l2.4,-2.6" stroke="#3aa43a" stroke-width="1.2" fill="none"/>
<path d="M832,114.6L834.4,111.8H840L837.6,114.6Z" fill="#e9e9f6" stroke="#7c86b4" stroke-width=".7"/>
<path d="M827.4,117.4l1.2,1.3l2.4,-2.6" stroke="#3aa43a" stroke-width="1.2" fill="none"/>
<path d="M832,119.0L834.4,116.2H840L837.6,119.0Z" fill="#e9e9f6" stroke="#7c86b4" stroke-width=".7"/>
<path d="M846.4,108.4H852.6L856.6,112.4H850.4Z" fill="#eef2fb" stroke="#6c7cb0" stroke-width=".7"/>
<path d="M846.4,111.6H852.6L856.6,115.6H850.4Z" fill="#eef2fb" stroke="#6c7cb0" stroke-width=".7"/>
<path d="M846.4,114.8H852.6L856.6,118.8H850.4Z" fill="#eef2fb" stroke="#6c7cb0" stroke-width=".7"/>
<path d="M850,115.2L850.8,112.6L855.2,108.2L858.4,111L853.8,115.4Z" fill="#2a2a44"/><path d="M850,115.2L850.8,112.8L852.6,114.4Z" fill="#fff"/>
<path d="M865,109H871.2L875.2,113H869Z" fill="#ececf6" stroke="#7c86b4" stroke-width=".7"/>
<path d="M865,112.2H871.2L875.2,116.2H869Z" fill="#ececf6" stroke="#7c86b4" stroke-width=".7"/>
<path d="M865,115.4H871.2L875.2,119.4H869Z" fill="#ececf6" stroke="#7c86b4" stroke-width=".7"/>
<use href="#eye" x="868.6" y="107.4" transform="translate(0,0)"/>
<rect x="951.4" y="105" width="11.8" height="13.4" rx="2" fill="url(#gb1)" stroke="#8c8c8c" stroke-width=".9"/><path d="M955.8,109V114.2L959,111.6Z" fill="#111"/>
<use href="#minus" x="830.6" y="129.0"/>
<use href="#pageic" x="844" y="127.3"/>
<use href="#minus" x="830.6" y="207.8"/>
<use href="#pageic" x="844" y="206.1"/>
<use href="#eye" x="858.4" y="144.6"/>
<use href="#noprint" x="870.2" y="143.0"/>
<rect x="893.1" y="142.8" width="11.7" height="9" fill="#34197c"/>
<use href="#pencil" x="883.2" y="143.5"/>
<use href="#minus" x="845.2" y="160.2"/>
<use href="#eye" x="858.4" y="160.3"/>
<use href="#printer" x="870.2" y="158.7"/>
<rect x="893.1" y="158.5" width="11.7" height="9" fill="#231f1a"/>
<use href="#pencil" x="883.2" y="159.2"/>
<rect x="873.4" y="174.0" width="9.4" height="9.6" fill="#f58a02" stroke="#5a3c1e" stroke-width=".9"/>
<rect x="873.4" y="189.7" width="9.4" height="9.6" fill="#f58a02" stroke="#5a3c1e" stroke-width=".9"/>
<use href="#eye" x="858.4" y="223.3"/>
<use href="#noprint" x="870.2" y="221.7"/>
<rect x="893.1" y="221.5" width="11.7" height="9" fill="#34197c"/>
<use href="#pencil" x="883.2" y="222.2"/>
<use href="#eye" x="858.4" y="239.1"/>
<use href="#noprint" x="870.2" y="237.5"/>
<rect x="893.1" y="237.2" width="11.7" height="9" fill="#231f1a"/>
<use href="#pencil" x="883.2" y="238.0"/>
<ellipse cx="863.2" cy="257.8" rx="4.6" ry="2.7" fill="#cfcfda" stroke="#77778c" stroke-width=".7"/><path d="M859,258.4C861,260.4 865.4,260.4 867.4,258.4" stroke="#55556c" stroke-width=".8" fill="none"/>
<use href="#noprint" x="870.2" y="253.2"/>
<rect x="893.1" y="253.0" width="11.7" height="9" fill="#c6c6c6"/>
<use href="#pencil" x="883.6" y="254.2" />
<circle cx="887.8" cy="257.4" r="3.6" fill="rgba(255,255,255,.3)" stroke="#dc1414" stroke-width="1.3"/><path d="M890.3,254.9L885.3,259.9" stroke="#dc1414" stroke-width="1.3"/>
<path d="M960.9,231.6L914.6,185" stroke="#e8263a" stroke-width="3.1" stroke-linecap="butt"/>
<path d="M908.3,178.8L921.2,181.2L911.2,191.4Z" fill="#e8263a"/>
<path d="M966.4,100.5V428" stroke="#c9c9c9" stroke-width="1"/>
<path d="M966.4,103.8H979.6Q981.6,103.8 981.6,105.8V149.5" fill="none" stroke="#bdbdbd" stroke-width=".9"/>
<path d="M966.4,150.8H980.8Q982.8,150.8 982.8,152.8V230.6Q982.8,232.6 980.8,232.6H966.4Z" fill="#f7f7f7" stroke="#b4b4b4" stroke-width=".9"/>
<path d="M966.8,428V236Q966.8,234 968.8,234H980.6Q982.6,234 982.6,236V428" fill="none" stroke="#c4c4c4" stroke-width=".9"/>
<path d="M984.9,100.5V428" stroke="#dcdcdc" stroke-width="1"/>
<rect x="967.9" y="107" width="11.4" height="11.8" rx="1" fill="#cfcfe0" stroke="#b0b0c6" stroke-width=".7"/><rect x="970.2" y="109.4" width="6.8" height="7" fill="none" stroke="#ececf6" stroke-width=".8"/><circle cx="973.6" cy="112.9" r="1.5" fill="#f4f4fb" stroke="#a0a0bc" stroke-width=".6"/>
<path d="M971,154.4V162.6M971,156.6H973.4M971,160H973.4M971,162.6H973.4" stroke="#444" stroke-width=".8" fill="none" stroke-dasharray="1 .8"/><rect x="973.6" y="154" width="2.4" height="2" fill="#2a2a4a"/><rect x="976.8" y="154" width="2.6" height="2" fill="#8a8ab0"/><rect x="973.8" y="158.8" width="2.2" height="2" fill="#2a2a4a"/><rect x="976.8" y="158.8" width="2.6" height="2" fill="#8a8ab0"/><rect x="973.8" y="161.8" width="5" height="1.6" fill="#55557a"/>
<path d="M972.2,220.8L977,225.6M977,220.8L972.2,225.6" stroke="#6a6a6a" stroke-width="1.1"/>
<rect x="807.4" y="246.2" width="11.4" height="190" rx="1.2" fill="url(#gth)" stroke="#9c9c9c" stroke-width=".8"/>
<path d="M811,110.2L813.7,107L816.4,110.2Z" fill="#4a4a4a"/>
</svg>
<div class="t" style="left:961.4px;top:130.6px;width:25px;text-align:center;font-size:8.3px;color:#7c7c8a;transform:rotate(90deg)">轮廓图</div>
<div class="t" style="left:952px;top:188.2px;width:45px;text-align:center;font-size:8.2px;color:#222;transform:rotate(90deg)">对象管理器</div>
<div id="lb"></div>
</div>
</body>
</html>
